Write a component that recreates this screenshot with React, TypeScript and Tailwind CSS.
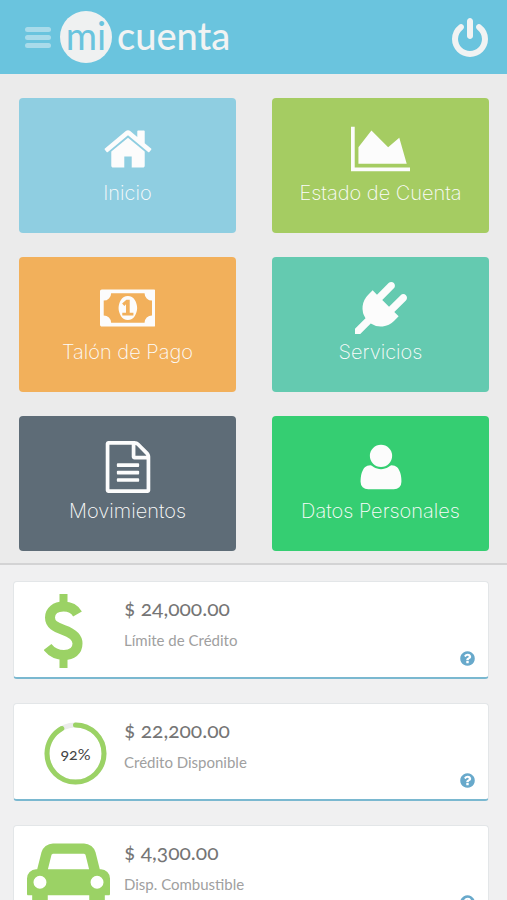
import React from 'react';

interface GlyphProps {
  d: string;
  width?: number;
  className?: string;
}

// All glyphs share a 1792 unit em height, only the width differs.
const Glyph: React.FC<GlyphProps> = ({ d, width = 1792, className }) => (
  <svg viewBox={`0 0 ${width} 1792`} className={className} fill="currentColor" aria-hidden="true">
    <path d={d} />
  </svg>
);

const glyphs = {
  power:
    'M1664 896q0 156-61 298t-164 245-245 164-298 61-298-61-245-164-164-245-61-298q0-182 80.5-343t226.5-270q43-32 95.5-25t83.5 50q32 42 24.5 94.5t-49.5 84.5q-98 74-151.5 181t-53.5 228q0 104 40.5 198.5t109.5 163.5 163.5 109.5 198.5 40.5 198.5-40.5 163.5-109.5 109.5-163.5 40.5-198.5q0-121-53.5-228t-151.5-181q-42-32-49.5-84.5t24.5-94.5q31-43 84-50t95 25q146 109 226.5 270t80.5 343zm-640-768v640q0 52-38 90t-90 38-90-38-38-90v-640q0-52 38-90t90-38 90 38 38 90z',
  home: 'M1472 992v480q0 26-19 45t-45 19h-384v-384h-256v384h-384q-26 0-45-19t-19-45v-480q0-1 .5-3t.5-3l575-474 575 474q1 2 1 6zm223-69l-62 74q-8 9-21 11h-3q-13 0-21-7l-692-577-692 577q-12 8-24 7-13-2-21-11l-62-74q-8-10-7-23.5t11-21.5l719-599q32-26 76-26t76 26l244 204v-195q0-14 9-23t23-9h192q14 0 23 9t9 23v408l219 182q10 8 11 21.5t-7 23.5z',
  chart: 'M2048 1536v128h-2048v-1536h128v1408h1920zm-384-1024l256 896h-1664v-576l448-576 576 576z',
  money:
    'M768 1152h384v-96h-128v-448h-114l-148 137 77 80q42-37 55-57h2v288h-128v96zm512-256q0 70-21 142t-59.5 134-101.5 101-138 39-138-39-101.5-101-59.5-134-21-142 21-142 59.5-134 101.5-101 138-39 138 39 101.5 101 59.5 134 21 142zm512 256v-512q-106 0-181-75t-75-181h-1152q0 106-75 181t-181 75v512q106 0 181 75t75 181h1152q0-106 75-181t181-75zm128-832v1152q0 26-19 45t-45 19h-1792q-26 0-45-19t-19-45v-1152q0-26 19-45t45-19h1792q26 0 45 19t19 45z',
  plug: 'M1755 453q37 38 37 90.5t-37 90.5l-401 400 150 150-160 160q-163 163-389.5 186.5t-411.5-100.5l-362 362h-181v-181l362-362q-124-185-100.5-411.5t186.5-389.5l160-160 150 150 400-401q38-37 91-37t90 37 37 90.5-37 90.5l-400 401 234 234 401-400q38-37 91-37t90 37z',
  file: 'M1596 380q28 28 48 76t20 88v1152q0 40-28 68t-68 28h-1344q-40 0-68-28t-28-68v-1600q0-40 28-68t68-28h896q40 0 88 20t76 48zm-444-244v376h376q-10-29-22-41l-313-313q-12-12-41-22zm384 1528v-1024h-416q-40 0-68-28t-28-68v-416h-768v1536h1280zm-1024-864q0-14 9-23t23-9h704q14 0 23 9t9 23v64q0 14-9 23t-23 9h-704q-14 0-23-9t-9-23v-64zm736 224q14 0 23 9t9 23v64q0 14-9 23t-23 9h-704q-14 0-23-9t-9-23v-64q0-14 9-23t23-9h704zm0 256q14 0 23 9t9 23v64q0 14-9 23t-23 9h-704q-14 0-23-9t-9-23v-64q0-14 9-23t23-9h704z',
  user: 'M1600 1405q0 120-73 189.5t-194 69.5h-874q-121 0-194-69.5t-73-189.5q0-53 3.5-103.5t14-109 26.5-108.5 43-97.5 62-81 85.5-53.5 111.5-20q9 0 42 21.5t74.5 48 108 48 133.5 21.5 133.5-21.5 108-48 74.5-48 42-21.5q61 0 111.5 20t85.5 53.5 62 81 43 97.5 26.5 108.5 14 109 3.5 103.5zm-320-893q0 159-112.5 271.5t-271.5 112.5-271.5-112.5-112.5-271.5 112.5-271.5 271.5-112.5 271.5 112.5 112.5 271.5z',
  car: 'M480 1088q0-66-47-113t-113-47-113 47-47 113 47 113 113 47 113-47 47-113zm36-320h1016l-89-357q-2-8-14-17.5t-21-9.5h-768q-9 0-21 9.5t-14 17.5zm1372 320q0-66-47-113t-113-47-113 47-47 113 47 113 113 47 113-47 47-113zm160-96v384q0 14-9 23t-23 9h-96v128q0 80-56 136t-136 56-136-56-56-136v-128h-1024v128q0 80-56 136t-136 56-136-56-56-136v-128h-96q-14 0-23-9t-9-23v-384q0-93 65.5-158.5t158.5-65.5h28l105-419q23-94 104-157.5t179-63.5h768q98 0 179 63.5t104 157.5l105 419h28q93 0 158.5 65.5t65.5 158.5z',
  question:
    'M1024 1376v-192q0-14-9-23t-23-9h-192q-14 0-23 9t-9 23v192q0 14 9 23t23 9h192q14 0 23-9t9-23zm256-672q0-88-55.5-163t-138.5-116-170-41q-243 0-371 213-15 24 8 42l132 100q7 6 19 6 16 0 25-12 53-68 86-92 34-24 86-24 48 0 85.5 26t37.5 59q0 38-20 61t-68 45q-63 28-115.5 86.5t-52.5 125.5v36q0 14 9 23t23 9h192q14 0 23-9t9-23q0-19 21.5-49.5t54.5-49.5q32-18 49-28.5t46-35 44.5-48 28-60.5 12.5-81zm384 192q0 209-103 385.5t-279.5 279.5-385.5 103-385.5-103-279.5-279.5-103-385.5 103-385.5 279.5-279.5 385.5-103 385.5 103 279.5 279.5 103 385.5z',
};

const tiles = [
  { label: 'Inicio', color: 'bg-[#8fcee1]', d: glyphs.home, width: 1792 },
  { label: 'Estado de Cuenta', color: 'bg-[#a5cc62]', d: glyphs.chart, width: 2048 },
  { label: 'Talón de Pago', color: 'bg-[#f2b05b]', d: glyphs.money, width: 1920 },
  { label: 'Servicios', color: 'bg-[#64cab0]', d: glyphs.plug, width: 1792 },
  { label: 'Movimientos', color: 'bg-[#5e6c77]', d: glyphs.file, width: 1792 },
  { label: 'Datos Personales', color: 'bg-[#35ce72]', d: glyphs.user, width: 1792 },
];

const DollarIcon: React.FC = () => (
  <svg viewBox="0 0 39 74" className="ml-[30px] mt-3 h-[74px] w-[39px]" fill="none" stroke="#9bd265" aria-hidden="true">
    <path d="M19.500 0v12M19.500 62v12" strokeWidth="8" />
    <path
      d="M33.500 20C31 15.500 26 12.500 19.500 12.500C11.500 12.500 6 17 6 23.500C6 30.500 11.500 33 19.500 36C28 39 33.500 42.500 33.500 49.500C33.500 57 28 61 20 61C13 61 7.500 58 3.500 53"
      strokeWidth="10"
    />
  </svg>
);

const Gauge: React.FC<{ percent: number }> = ({ percent }) => (
  <div className="ml-[30px] mt-[18px] grid size-[63px] place-items-center">
    <svg viewBox="0 0 63 63" className="col-start-1 row-start-1 size-[63px] -rotate-90" fill="none" aria-hidden="true">
      <circle cx="31.500" cy="31.500" r="28.500" stroke="#ececec" strokeWidth="5" />
      <circle
        cx="31.500"
        cy="31.500"
        r="28.500"
        stroke="#9bd265"
        strokeWidth="5"
        strokeLinecap="round"
        pathLength={100}
        strokeDasharray={`${percent} 100`}
      />
    </svg>
    <span className="col-start-1 row-start-1 text-[16px] leading-6 text-[#444] oldstyle-nums">{percent}%</span>
  </div>
);

const balances = [
  { amount: '$ 24,000.00', label: 'Límite de Crédito', icon: <DollarIcon /> },
  { amount: '$ 22,200.00', label: 'Crédito Disponible', icon: <Gauge percent={92} /> },
  {
    amount: '$ 4,300.00',
    label: 'Disp. Combustible',
    icon: <Glyph d={glyphs.car} width={2048} className="ml-[13px] mt-3 h-[73px] w-[83px] text-[#9bd265]" />,
  },
];

const App: React.FC = () => {
  return (
    <div className="flex h-screen flex-col bg-[#f0f0f1] font-['Lato',sans-serif]">
      <header className="flex h-[74px] shrink-0 items-center bg-[#6ac4de] pl-[25px] pr-4 text-[#f1f3f3]">
        <button type="button" aria-label="Menú" className="flex w-[26px] flex-col gap-[3px] opacity-50">
          <span className="h-[5px] w-full rounded-full bg-[#e9f3f6]" />
          <span className="h-[5px] w-full rounded-full bg-[#e9f3f6]" />
          <span className="h-[5px] w-full rounded-full bg-[#e9f3f6]" />
        </button>
        <h1 className="ml-[9px] flex items-center gap-[5px] text-[38px] leading-[48px]">
          <span className="flex size-[52px] justify-center rounded-full bg-[#eff1f1] text-[#6ac4de]">mi</span>
          <span className="h-[52px] font-medium">cuenta</span>
        </h1>
        <button type="button" aria-label="Salir" className="ml-auto pt-1">
          <Glyph d={glyphs.power} className="size-[42px]" />
        </button>
      </header>

      <main className="min-h-0 grow overflow-y-auto [scrollbar-width:none]">
        <nav className="grid grid-cols-2 gap-x-9 gap-y-6 border-b-2 border-[#d3d3d4] bg-[#ebebeb] pb-3 pl-[19px] pr-[18px] pt-6">
          {tiles.map((tile) => (
            <a
              key={tile.label}
              href="#"
              className={`flex h-[135px] flex-col items-center rounded pt-[25px] text-[#fcfcfc] ${tile.color}`}
            >
              <Glyph d={tile.d} width={tile.width} className="h-[52px]" />
              <span className="font-['Inter',sans-serif] text-[20px] font-extralight leading-9">{tile.label}</span>
            </a>
          ))}
        </nav>

        <section className="flex flex-col gap-6 pb-6 pl-[13px] pr-[18px] pt-4">
          {balances.map((item) => (
            <article
              key={item.label}
              className="flex h-[98px] rounded border border-b-2 border-[#e3e6e8] border-b-[#7ab8d0] bg-white"
            >
              <div className="w-[110px] shrink-0">{item.icon}</div>
              <div className="grow pt-3">
                <p className="text-[21px] leading-7 text-[#757575] oldstyle-nums">{item.amount}</p>
                <p className="mt-1 text-[15px] leading-7 text-[#a0a0a0]">{item.label}</p>
              </div>
              <button type="button" aria-label={`Ayuda: ${item.label}`} className="mb-2.5 mr-3 self-end text-[#68a9cb]">
                <Glyph d={glyphs.question} className="size-[17px]" />
              </button>
            </article>
          ))}
        </section>
      </main>
    </div>
  );
};

export default App;
